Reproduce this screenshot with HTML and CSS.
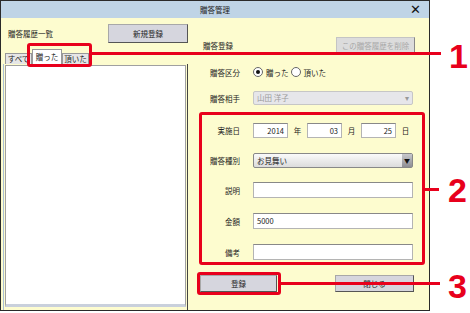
FILE: index.html
```html
<!DOCTYPE html>
<html lang="ja">
<head>
    <meta charset="UTF-8">
    <title>贈答管理</title>
    <link rel="stylesheet" href="styles.css">
</head>
<body>
<div class="page">
    <div class="window">
        <div class="titlebar">
            <span class="title">贈答管理</span>
            <span class="close">✕</span>
        </div>
        <div class="main">
            <!-- 左: 履歴一覧 -->
            <div class="left">
                <div class="left-head">
                    <span>贈答履歴一覧</span>
                    <button class="btn btn-new">新規登録</button>
                </div>
                <div class="tabs">
                    <span class="tab">すべて</span>
                    <span class="tab active">贈った</span>
                    <span class="tab">頂いた</span>
                </div>
                <div class="pane">
                    <div class="list"></div>
                </div>
            </div>

            <!-- 右: 登録フォーム -->
            <div class="right">
                <div class="row row-head">
                    <span>贈答登録</span>
                    <button class="btn btn-del" disabled>この贈答履歴を削除</button>
                </div>
                <div class="row r-kind">
                    <span class="lbl">贈答区分</span>
                    <span class="radio on"></span><span class="rtext">贈った</span>
                    <span class="radio"></span><span class="rtext">頂いた</span>
                </div>
                <div class="row r-partner">
                    <span class="lbl">贈答相手</span>
                    <div class="select disabled">山田 洋子<span class="arr-small">▾</span></div>
                </div>
                <div class="row r-date">
                    <span class="lbl">実施日</span>
                    <div class="input num">2014</div><span class="unit">年</span>
                    <div class="input num">03</div><span class="unit">月</span>
                    <div class="input num">25</div><span class="unit">日</span>
                </div>
                <div class="row r-type">
                    <span class="lbl">贈答種別</span>
                    <div class="select">お見舞い<span class="arr">▼</span></div>
                </div>
                <div class="row r-text first">
                    <span class="lbl">説明</span>
                    <div class="input wide"></div>
                </div>
                <div class="row r-text">
                    <span class="lbl">金額</span>
                    <div class="input wide">5000</div>
                </div>
                <div class="row r-text">
                    <span class="lbl">備考</span>
                    <div class="input wide"></div>
                </div>
                <div class="row r-buttons">
                    <button class="btn btn-save">登録</button>
                    <button class="btn btn-close">閉じる</button>
                </div>
            </div>
        </div>
    </div>

    <!-- 注釈 -->
    <div class="mark box1"></div>
    <div class="line line1"></div>
    <div class="num-label n1">1</div>
    <div class="mark box2"></div>
    <div class="line line2"></div>
    <div class="num-label n2">2</div>
    <div class="mark box3"></div>
    <div class="line line3"></div>
    <div class="num-label n3">3</div>
</div>
</body>
</html>
```

FILE: styles.css
```css
body {
    margin: 0;
    background: #fff;
    font-family: "Noto Sans CJK JP", "Noto Sans", sans-serif;
    font-size: 7.5px;
    color: #222;
}
.page {
    position: relative;
    width: 470px;
    height: 313px;
}
.window {
    width: 428px;
    height: 309px;
    border: 1px solid #2a2a2a;
    background: #fdfccf;
    display: flex;
    flex-direction: column;
}
.titlebar {
    height: 17px;
    background: #bfd4e6;
    display: flex;
    align-items: center;
    justify-content: center;
    position: relative;
}
.close {
    position: absolute;
    right: 8px;
    top: 1px;
    font-family: "DejaVu Sans", sans-serif;
    font-size: 13px;
    font-weight: bold;
    color: #111;
}
.main {
    flex: 1;
    display: flex;
}
.left {
    width: 187px;
    display: flex;
    flex-direction: column;
}
.left-head {
    display: flex;
    align-items: center;
    justify-content: space-between;
    height: 19px;
    margin-top: 6px;
    padding-left: 7px;
}
.btn {
    font-family: inherit;
    font-size: 7.5px;
    color: #222;
    background: #d6d6de;
    border: 1px solid #a8a8a8;
    border-right-color: #555;
    border-bottom-color: #555;
    padding: 0;
}
.btn-new {
    width: 80px;
    height: 19px;
}
.tabs {
    display: flex;
    align-items: flex-end;
    margin-top: 6px;
    padding-left: 4px;
    height: 15px;
}
.tab {
    height: 11px;
    line-height: 10px;
    width: 27px;
    padding: 0;
    text-align: center;
    white-space: nowrap;
    background: #e6e6e6;
    border: 1px solid #999;
    border-bottom: none;
    box-sizing: border-box;
}
.tab.active {
    height: 15px;
    line-height: 14px;
    width: 30px;
    background: #fff;
}
.pane {
    flex: 1;
    margin-left: 2px;
    border-left: 1px solid #a9bfd6;
    border-right: 1px solid #444;
    padding: 1px 1px 3px 1px;
    display: flex;
}
.list {
    flex: 1;
    background: #fff;
    border: 1px solid #a0a0a0;
    border-bottom: 3px solid #c9d0dc;
}
.right {
    flex: 1;
    display: flex;
    flex-direction: column;
}
.row {
    display: flex;
    align-items: center;
}
.row-head {
    margin-top: 19px;
    height: 16px;
    padding-left: 15px;
    padding-right: 14px;
    justify-content: space-between;
}
.btn-del {
    width: 79px;
    height: 16px;
    background: #dcdcdc;
    color: #a8a8a8;
    border-color: #c4c4c4;
    border-right-color: #888;
    border-bottom-color: #888;
}
.lbl {
    width: 52px;
    margin-right: 13px;
    text-align: right;
}
.r-kind {
    margin-top: 12px;
    height: 14px;
}
.radio {
    width: 8px;
    height: 8px;
    border: 1px solid #666;
    border-radius: 50%;
    background: #fff;
    position: relative;
    margin-right: 3px;
}
.radio.on::after {
    content: "";
    position: absolute;
    left: 2px;
    top: 2px;
    width: 4px;
    height: 4px;
    border-radius: 50%;
    background: #111;
}
.rtext {
    margin-right: 2px;
}
.r-partner {
    margin-top: 12px;
    height: 14px;
}
.select {
    width: 160px;
    height: 15px;
    box-sizing: border-box;
    border: 1px solid #888;
    border-radius: 2px;
    background: linear-gradient(#fafafa, #dcdcdc);
    padding-left: 3px;
    line-height: 13px;
    position: relative;
}
.select.disabled {
    height: 14px;
    line-height: 12px;
    background: #e6e6ea;
    border-color: #c6c6c6;
    color: #9a9a9a;
}
.arr-small {
    position: absolute;
    right: 3px;
    top: 0;
    color: #999;
}
.arr {
    position: absolute;
    right: 0;
    top: 0;
    width: 10px;
    height: 13px;
    font-size: 6px;
    text-align: center;
    color: #111;
    background: linear-gradient(#c8c8cc, #8e8e94);
}
.input {
    height: 16px;
    box-sizing: border-box;
    background: #fff;
    border: 1px solid #b4b4b4;
    border-top-color: #888;
    padding: 0 3px;
    line-height: 14px;
}
.num {
    width: 35px;
    height: 15px;
    line-height: 13px;
    text-align: right;
}
.unit {
    width: 19px;
    text-align: center;
}
.r-date {
    margin-top: 18px;
    height: 15px;
}
.r-type {
    margin-top: 15px;
    height: 15px;
}
.r-text {
    margin-top: 15px;
    height: 16px;
}
.r-text.first {
    margin-top: 14px;
}
.wide {
    width: 160px;
}
.r-buttons {
    margin-top: 15px;
    height: 17px;
    padding-left: 12px;
    padding-right: 15px;
    justify-content: space-between;
}
.btn-save {
    width: 77px;
    height: 17px;
}
.btn-close {
    width: 79px;
    height: 17px;
}

/* 注釈 */
.mark {
    position: absolute;
    border: 3px solid #e8001c;
    border-radius: 3px;
    box-sizing: border-box;
}
.box1 { left: 27px; top: 43px; width: 65px; height: 24px; }
.box2 { left: 199px; top: 112px; width: 226px; height: 153px; }
.box3 { left: 197px; top: 272px; width: 84px; height: 23px; }
.line {
    position: absolute;
    height: 3px;
    background: #e8001c;
}
.line1 { left: 91px; top: 52px; width: 350px; }
.line2 { left: 424px; top: 188px; width: 15px; }
.line3 { left: 280px; top: 282px; width: 160px; }
.num-label {
    position: absolute;
    font-family: "Liberation Sans", Arial, sans-serif;
    font-weight: bold;
    font-size: 34px;
    line-height: 34px;
    color: #e8001c;
}
.n1 { left: 449px; top: 39px; }
.n2 { left: 448px; top: 173px; }
.n3 { left: 448px; top: 269px; }
```
